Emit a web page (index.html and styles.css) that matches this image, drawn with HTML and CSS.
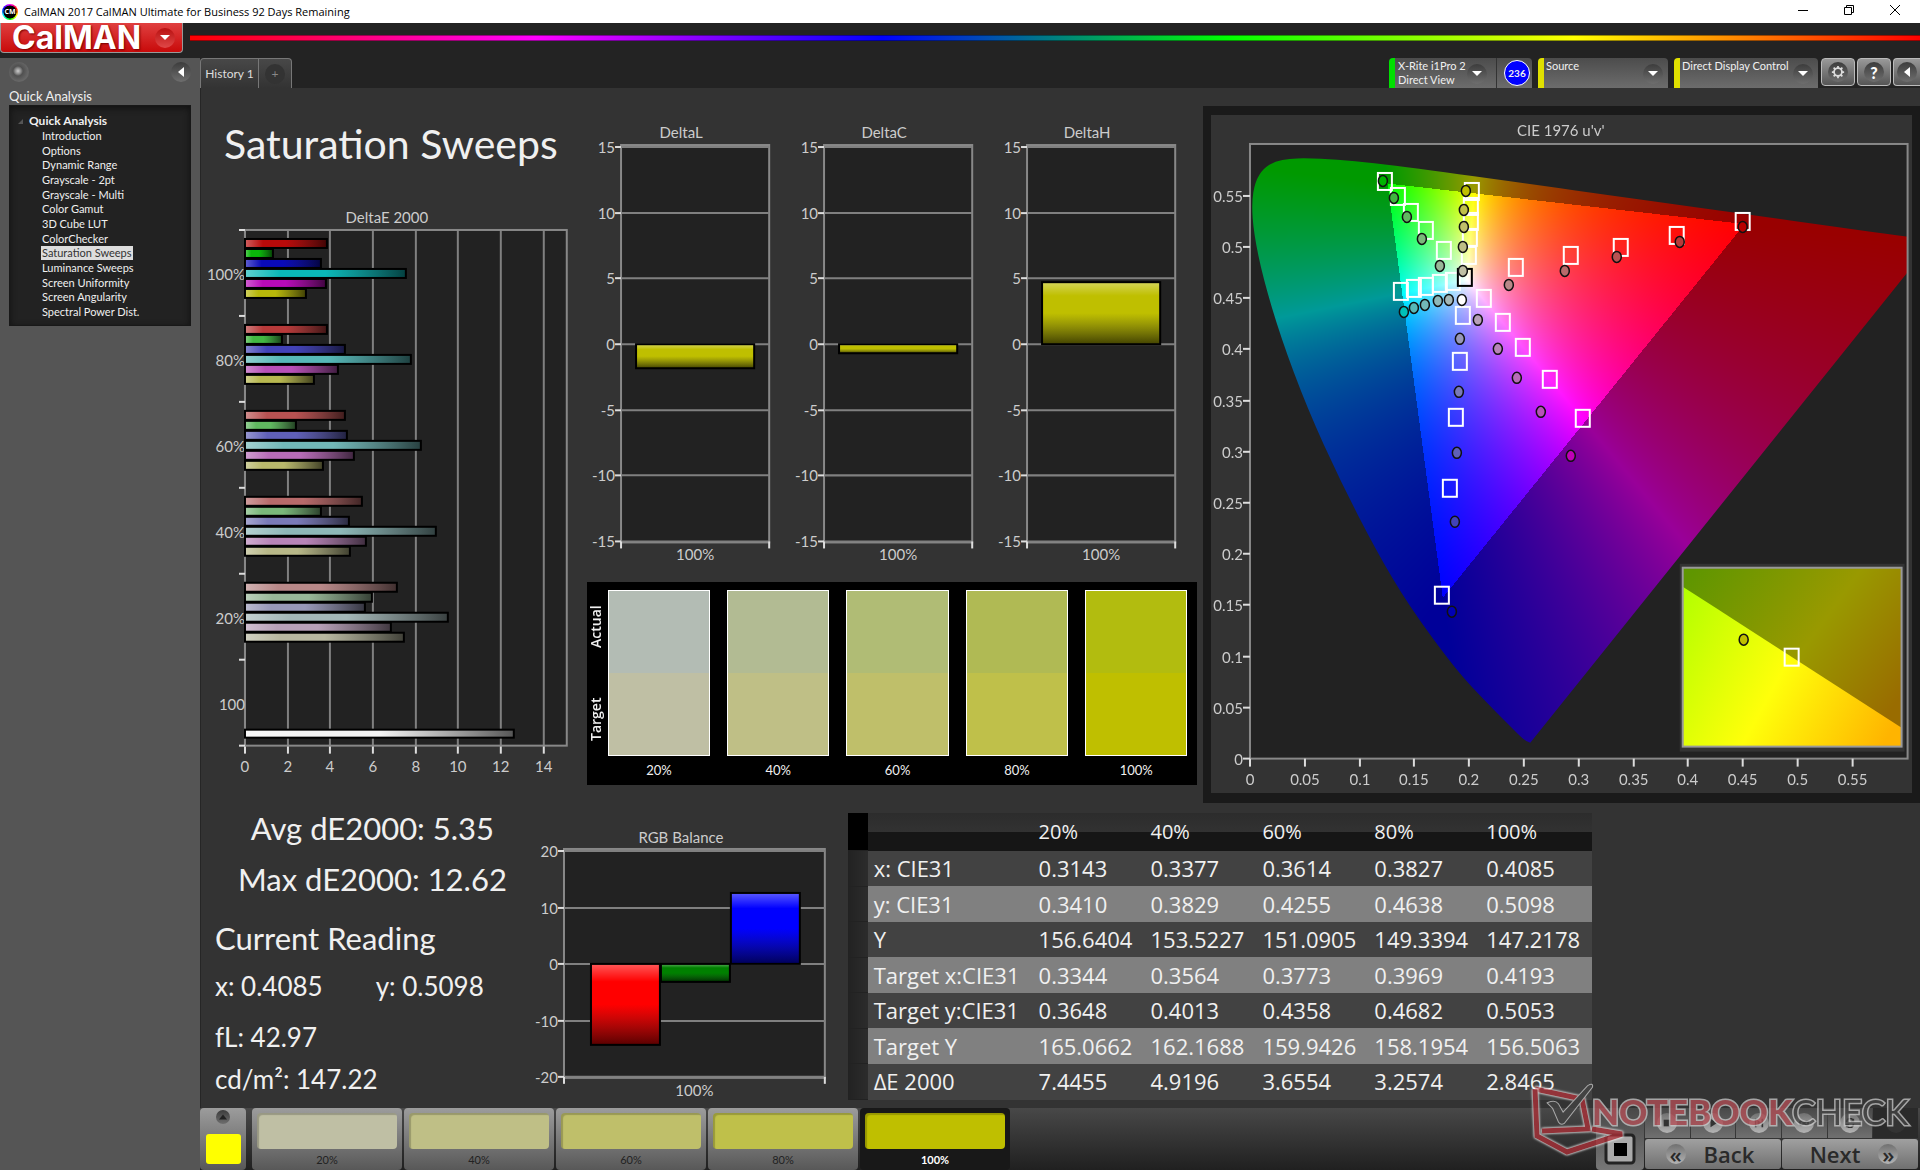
FILE: index.html
```html
<!DOCTYPE html>
<html lang="en">
<head>
    <meta charset="UTF-8">
    <meta name="viewport" content="width=device-width, initial-scale=1.0">
    <title>CalMAN 2017 CalMAN Ultimate for Business 92 Days Remaining</title>
    <link rel="stylesheet" href="styles.css">
</head>
<body>
    <!-- shared gradients for the chart bars -->
    <svg class="defs" width="0" height="0" aria-hidden="true">
        <defs>
            <linearGradient id="shadeH" x1="0" y1="0" x2="1" y2="0">
                <stop offset="0" stop-color="#fff" stop-opacity="0.35"/>
                <stop offset="0.22" stop-color="#fff" stop-opacity="0"/>
                <stop offset="0.5" stop-color="#222" stop-opacity="0"/>
                <stop offset="1" stop-color="#000" stop-opacity="0.65"/>
            </linearGradient>
            <linearGradient id="shadeV" x1="0" y1="0" x2="0" y2="1">
                <stop offset="0" stop-color="#fff" stop-opacity="0.35"/>
                <stop offset="0.22" stop-color="#fff" stop-opacity="0"/>
                <stop offset="0.5" stop-color="#222" stop-opacity="0"/>
                <stop offset="1" stop-color="#000" stop-opacity="0.65"/>
            </linearGradient>
            <linearGradient id="insetDark" gradientUnits="userSpaceOnUse" x1="472" y1="470" x2="668" y2="612">
                <stop offset="0" stop-color="#5f9600"/>
                <stop offset="0.56" stop-color="#999900"/>
                <stop offset="1" stop-color="#996c00"/>
            </linearGradient>
            <linearGradient id="insetLight" gradientUnits="userSpaceOnUse" x1="472" y1="480" x2="690" y2="600">
                <stop offset="0" stop-color="#b4ff00"/>
                <stop offset="0.5" stop-color="#ffff0a"/>
                <stop offset="1" stop-color="#ffb400"/>
            </linearGradient>
        </defs>
    </svg>

    <div class="titlebar">
        <span class="app-icon">CM</span>
        <span class="app-title">CalMAN 2017 CalMAN Ultimate for Business 92 Days Remaining</span>
        <div class="window-buttons">
            <button aria-label="Minimize"><svg viewBox="0 0 12 12"><path d="M1 6.500h10"/></svg></button>
            <button aria-label="Restore"><svg viewBox="0 0 12 12"><path d="M1.500 3.500h7v7h-7zM3.500 3.500v-2h7v7h-2"/></svg></button>
            <button aria-label="Close"><svg viewBox="0 0 12 12"><path d="M1 1l10 10M11 1L1 11"/></svg></button>
        </div>
    </div>

    <header class="brandbar">
        <button class="brand">CalMAN <span class="round"><svg viewBox="0 0 10 6"><path d="M0 0h10L5 5z"/></svg></span></button>
        <div class="rainbow"></div>
    </header>

    <div class="app">
        <aside class="sidebar">
            <div class="sidebar-top">
                <button class="round knob" aria-label="Pin"></button>
                <button class="round" aria-label="Collapse"><svg viewBox="0 0 6 10"><path d="M6 0v10L0 5z"/></svg></button>
            </div>
            <h2>Quick Analysis</h2>
            <nav class="tree">
                <p>Quick Analysis</p>
                <ul>
                    <li><a href="#">Introduction</a></li>
                    <li><a href="#">Options</a></li>
                    <li><a href="#">Dynamic Range</a></li>
                    <li><a href="#">Grayscale - 2pt</a></li>
                    <li><a href="#">Grayscale - Multi</a></li>
                    <li><a href="#">Color Gamut</a></li>
                    <li><a href="#">3D Cube LUT</a></li>
                    <li><a href="#">ColorChecker</a></li>
                    <li><a href="#" class="selected">Saturation Sweeps</a></li>
                    <li><a href="#">Luminance Sweeps</a></li>
                    <li><a href="#">Screen Uniformity</a></li>
                    <li><a href="#">Screen Angularity</a></li>
                    <li><a href="#">Spectral Power Dist.</a></li>
                </ul>
            </nav>
        </aside>

        <div class="main">
            <div class="toolbar">
                <div class="tabs">
                    <button class="tab">History 1</button>
                    <button class="tab tab-add" aria-label="Add history"><span class="round">+</span></button>
                </div>
                <div class="devices">
                    <div class="device meter">
                        <button class="meter-name"><span>X-Rite i1Pro 2<br>Direct View</span><span class="round"><svg viewBox="0 0 10 6"><path d="M0 0h10L5 5z"/></svg></span></button>
                        <span class="badge">236</span>
                    </div>
                    <label class="device source">
                        <select aria-label="Source"><option>Source</option></select>
                        <span class="round"><svg viewBox="0 0 10 6"><path d="M0 0h10L5 5z"/></svg></span>
                    </label>
                    <label class="device display">
                        <select aria-label="Display control"><option>Direct Display Control</option></select>
                        <span class="round"><svg viewBox="0 0 10 6"><path d="M0 0h10L5 5z"/></svg></span>
                    </label>
                    <button class="tool" aria-label="Settings"><span class="round"><svg class="gear" viewBox="0 0 16 16"><circle cx="8" cy="8" r="4.500"/><path d="M8 1v2.500M8 12.500V15M1 8h2.500M12.500 8H15M3 3l2 2M11 11l2 2M13 3l-2 2M5 11l-2 2"/></svg></span></button>
                    <button class="tool" aria-label="Help"><span class="round">?</span></button>
                    <button class="tool tool-last" aria-label="Collapse toolbar"><span class="round"><svg viewBox="0 0 6 10"><path d="M6 0v10L0 5z"/></svg></span></button>
                </div>
            </div>

            <main class="workspace">
                <div class="upper">
                    <section class="sweeps">
                        <h1>Saturation Sweeps</h1>
                        <svg id="deltaE" class="chart" viewBox="0 0 380 590"></svg>
                    </section>

                    <section class="deltas">
                        <div class="delta-charts">
                            <svg id="deltaL" class="chart" viewBox="0 0 203 460"></svg>
                            <svg id="deltaC" class="chart" viewBox="0 0 203 460"></svg>
                            <svg id="deltaH" class="chart" viewBox="0 0 203 460"></svg>
                        </div>
                        <div class="swatches">
                            <div class="swatch-sides"><span>Actual</span><span>Target</span></div>
                            <div class="swatch-list">
                                <figure><div class="pair s20"></div><figcaption>20%</figcaption></figure>
                                <figure><div class="pair s40"></div><figcaption>40%</figcaption></figure>
                                <figure><div class="pair s60"></div><figcaption>60%</figcaption></figure>
                                <figure><div class="pair s80"></div><figcaption>80%</figcaption></figure>
                                <figure><div class="pair s100"></div><figcaption>100%</figcaption></figure>
                            </div>
                        </div>
                    </section>

                    <section class="cie">
                        <canvas id="gamut" width="701" height="678"></canvas>
                        <svg id="ciePlot" class="chart" viewBox="0 0 701 678"></svg>
                    </section>
                </div>

                <div class="lower">
                    <section class="readings">
                        <p class="big centered">Avg dE2000: 5.35</p>
                        <p class="big centered">Max dE2000: 12.62</p>
                        <p class="big current">Current Reading</p>
                        <p class="xy"><span>x: 0.4085</span><span>y: 0.5098</span></p>
                        <p class="fl">fL: 42.97</p>
                        <p class="cd">cd/m²: 147.22</p>
                    </section>
                    <svg id="rgb" class="chart" viewBox="0 0 310 288"></svg>
                    <table>
                        <thead>
                            <tr><td class="handle"></td><th></th><th>20%</th><th>40%</th><th>60%</th><th>80%</th><th>100%</th></tr>
                        </thead>
                        <tbody>
                            <tr><td class="handle"></td><th>x: CIE31</th><td>0.3143</td><td>0.3377</td><td>0.3614</td><td>0.3827</td><td>0.4085</td></tr>
                            <tr><td class="handle"></td><th>y: CIE31</th><td>0.3410</td><td>0.3829</td><td>0.4255</td><td>0.4638</td><td>0.5098</td></tr>
                            <tr><td class="handle"></td><th>Y</th><td>156.6404</td><td>153.5227</td><td>151.0905</td><td>149.3394</td><td>147.2178</td></tr>
                            <tr><td class="handle"></td><th>Target x:CIE31</th><td>0.3344</td><td>0.3564</td><td>0.3773</td><td>0.3969</td><td>0.4193</td></tr>
                            <tr><td class="handle"></td><th>Target y:CIE31</th><td>0.3648</td><td>0.4013</td><td>0.4358</td><td>0.4682</td><td>0.5053</td></tr>
                            <tr><td class="handle"></td><th>Target Y</th><td>165.0662</td><td>162.1688</td><td>159.9426</td><td>158.1954</td><td>156.5063</td></tr>
                            <tr><td class="handle"></td><th>ΔE 2000</th><td>7.4455</td><td>4.9196</td><td>3.6554</td><td>3.2574</td><td>2.8465</td></tr>
                        </tbody>
                    </table>
                </div>
            </main>

            <footer class="levels">
                <button class="level-current" aria-label="Current color"><span class="round"><svg viewBox="0 0 10 6"><path d="M0 6h10L5 0z"/></svg></span><span class="color"></span></button>
                <button class="level"><span class="color c20"></span>20%</button>
                <button class="level"><span class="color c40"></span>40%</button>
                <button class="level"><span class="color c60"></span>60%</button>
                <button class="level"><span class="color c80"></span>80%</button>
                <button class="level active"><span class="color c100"></span>100%</button>
                <div class="transport">
                    <button class="stop" aria-label="Pattern window"><svg viewBox="0 0 32 32"><rect x="2" y="2" width="28" height="28" rx="3" fill="#aaa" stroke="#222" stroke-width="3"/><rect x="10" y="10" width="13" height="13" fill="#000"/></svg></button>
                    <div class="steps">
                        <div class="step-icons">
                            <button aria-label="Stop"><span class="round"><svg viewBox="0 0 12 12"><path d="M2 2h8v8H2z"/></svg></span></button>
                            <button aria-label="Play"><span class="round"><svg viewBox="0 0 12 12"><path d="M3 1l8 5-8 5z"/></svg></span></button>
                            <button aria-label="Next reading"><span class="round"><svg viewBox="0 0 12 12"><path d="M1 1h2v10H1zM4 2l5 4-5 4zM9 1h2v10H9z"/></svg></span></button>
                            <button aria-label="Continuous"><span class="round"><svg class="line" viewBox="0 0 12 12"><path d="M6 6C4 3 1 3 1 6s3 3 5 0 5-3 5 0-3 3-5 0"/></svg></span></button>
                            <button aria-label="Refresh"><span class="round"><svg class="line" viewBox="0 0 12 12"><path d="M10 4a4 4 0 0 0-8 1M2 8a4 4 0 0 0 8-1M10 1v3H7M2 11V8h3"/></svg></span></button>
                            <button aria-label="Record" disabled><span class="round"></span></button>
                        </div>
                        <div class="step-nav">
                            <button><span class="round">«</span>Back</button>
                            <button>Next<span class="round">»</span></button>
                        </div>
                    </div>
                    <svg class="watermark" viewBox="0 0 384 76" aria-label="Notebookcheck">
                        <path class="frame" d="M5 6L52 16 58 46 12 48" />
                        <path class="frame" d="M5 6L7 53 37 69 92 51 62 46"/>
                        <path class="tick" d="M18 20q7-3 10 1l5 9L58 3q5-3 4 1L34 40q-3 2-5-1l-6-14z"/>
                        <text x="62" y="42" class="note">NOTEBOOK</text>
                        <text x="262" y="42" class="check">CHECK</text>
                    </svg>
                </div>
            </footer>
        </div>
    </div>
    <script src="script.js"></script>
</body>
</html>
```
FILE: styles.css
```css
* {
    box-sizing: border-box;
}
body {
    margin: 0;
    min-height: 100vh;
    display: flex;
    flex-direction: column;
    background-color: #232323;
    color: #f0f0f0;
    font-family: Lato, "Open Sans", sans-serif;
    font-size: 13px;
    overflow: hidden;
}
h1, h2, p, ul, figure {
    margin: 0;
    padding: 0;
    font-weight: normal;
}
button, select {
    font: inherit;
    color: inherit;
    border: 0;
    padding: 0;
    margin: 0;
    background: none;
}
.defs {
    position: absolute;
}
.round {
    display: flex;
    align-items: center;
    justify-content: center;
    flex: none;
    width: 20px;
    height: 20px;
    border-radius: 50%;
    background: linear-gradient(#3c3c3c, #6e6e6e);
}
.round svg {
    width: 10px;
    height: 10px;
    fill: #fff;
}

/* window title */
.titlebar {
    display: flex;
    align-items: center;
    height: 23px;
    background-color: #fff;
    color: #000;
    font-family: "Open Sans", sans-serif;
    font-size: 11px;
}
.app-icon {
    width: 16px;
    height: 16px;
    margin: 0 6px 0 2px;
    border-radius: 50%;
    background: radial-gradient(#000 55%, transparent 60%), conic-gradient(#f0f, #f00, #ff0, #0f0, #0ff, #00f, #f0f);
    color: #fff;
    font-size: 7px;
    font-weight: bold;
    line-height: 16px;
    text-align: center;
}
.window-buttons {
    display: flex;
    margin-left: auto;
    margin-right: 2px;
}
.window-buttons button {
    width: 46px;
    height: 23px;
}
.window-buttons svg {
    width: 12px;
    height: 12px;
    fill: none;
    stroke: #000;
}

/* logo and rainbow line */
.brandbar {
    display: flex;
    align-items: flex-start;
    gap: 7px;
    height: 35px;
}
.brand {
    display: flex;
    align-items: center;
    justify-content: space-between;
    width: 183px;
    height: 30px;
    padding: 0 7px 0 11px;
    border: 1px solid #999;
    border-top: 0;
    border-radius: 0 0 4px 4px;
    background: linear-gradient(#e04040, #c80a0a);
    color: #fff;
    font-family: Inter, sans-serif;
    font-size: 32px;
    font-weight: 700;
    line-height: 30px;
    text-shadow: 1px 1px 2px #700;
}
.brand .round {
    background: linear-gradient(#b81010, #e04848);
}
.rainbow {
    flex: 1;
    height: 6px;
    margin-top: 12px;
    background: linear-gradient(90deg, #f00, #f0f 20%, #00f 40%, #0f0 60%, #ff0 80%, #f00);
    border-top: 1px solid rgba(0, 0, 0, 0.4);
    border-bottom: 1px solid rgba(0, 0, 0, 0.4);
}

.app {
    display: flex;
    flex: 1;
}

/* workflow tree */
.sidebar {
    width: 200px;
    flex: none;
    padding: 4px 9px;
    background-color: #555;
}
.sidebar-top {
    display: flex;
    justify-content: space-between;
}
.knob {
    background: radial-gradient(circle at 45% 45%, #ccc 0, #888 3px, #505050 5px, #666 10px);
}
.sidebar h2 {
    margin-top: 5px;
    font-size: 13px;
    line-height: 18px;
}
.tree {
    height: 221px;
    padding: 7px 0 6px 19px;
    border: 1px solid #181818;
    background-color: #222;
    box-shadow: inset 0 2px 6px #111;
    font-size: 11px;
    display: flex;
    flex-direction: column;
}
.tree p {
    font-size: 12px;
    font-weight: bold;
    line-height: 16px;
}
.tree p::before {
    content: "";
    float: left;
    margin: 6px 0 0 -11px;
    border-left: 5px solid transparent;
    border-bottom: 5px solid #555;
}
.tree ul {
    flex: 1;
    display: flex;
    flex-direction: column;
    justify-content: space-between;
    list-style: none;
    padding-left: 12px;
}
.tree a {
    display: inline-block;
    padding: 0 1px;
    color: #f0f0f0;
    line-height: 14px;
    text-decoration: none;
}
.tree li {
    height: 14px;
}
.tree .selected {
    background-color: #ddd;
    color: #333;
}

/* tabs and devices */
.main {
    flex: 1;
    min-width: 0;
    display: flex;
    flex-direction: column;
}
.toolbar {
    display: flex;
    justify-content: space-between;
    height: 30px;
}
.tabs, .devices {
    display: flex;
}
.tab {
    width: 59px;
    border: 1px solid #777;
    border-bottom: 0;
    border-radius: 4px 0 0 0;
    background: linear-gradient(#484848, #333);
    color: #ddd;
    font-size: 12px;
}
.tab-add {
    width: 33px;
    border-left: 0;
    border-radius: 0 4px 0 0;
    color: #888;
}
.tab-add .round {
    margin: 0 auto;
    background: #333;
}
.device {
    display: flex;
    align-items: center;
    height: 30px;
    margin-right: 6px;
    border-left: 6px solid #e0e000;
    border-radius: 4px 4px 0 0;
    background: linear-gradient(#4c4c4c, #6c6c6c);
    font-size: 11px;
    line-height: 14px;
}
.device select {
    flex: 1;
    min-width: 0;
    height: 30px;
    padding: 0 0 14px 2px;
    appearance: none;
}
.device .round {
    margin: 2px 5px 0 0;
}
.meter {
    width: 143px;
    border-left-color: #00e000;
}
.meter-name {
    flex: 1;
    display: flex;
    justify-content: space-between;
    align-items: center;
    height: 30px;
    padding-left: 3px;
    border-right: 1px solid #333;
    text-align: left;
    white-space: nowrap;
}
.meter .meter-name .round {
    margin-right: 9px;
}
.badge {
    flex: none;
    width: 26px;
    height: 26px;
    margin: 0 2px 0 7px;
    border: 1px solid #fff;
    border-radius: 50%;
    background-color: #00f;
    font-size: 10px;
    font-weight: bold;
    line-height: 24px;
    text-align: center;
}
.source {
    width: 130px;
}
.display {
    width: 144px;
    margin-right: 3px;
}
.display .round {
    margin-left: -4px;
}
.tool {
    display: flex;
    align-items: center;
    justify-content: center;
    width: 34px;
    height: 28px;
    margin-right: 2px;
    border: 1px solid #bbb;
    border-radius: 4px;
    background: linear-gradient(#999, #555);
    color: #fff;
    font-size: 16px;
    font-weight: 900;
}
.tool-last {
    width: 27px;
    margin-right: 0;
    border-right: 0;
    border-radius: 4px 0 0 4px;
}
.round .gear {
    width: 14px;
    height: 14px;
    fill: none;
    stroke: #ddd;
    stroke-width: 2px;
}

/* workspace */
.workspace {
    flex: 1;
    border-left: 1px solid #262626;
    background-color: #333;
}
.upper {
    display: grid;
    grid-template-columns: 380fr 623fr 717fr;
    align-items: start;
}
.chart {
    display: block;
    width: 100%;
    font-size: 15px;
    fill: #ccc;
}
h1 {
    padding: 26px 0 26px 23px;
    font-size: 41px;
    line-height: 60px;
}
.deltas {
    padding: 30px 6px 0 2px;
}
.delta-charts {
    display: grid;
    grid-template-columns: 1fr 1fr 1fr;
    margin-right: 5px;
}
.swatches {
    display: flex;
    gap: 4px;
    height: 203px;
    margin: 4px 0 0 4px;
    padding: 8px 10px 0 1px;
    background-color: #000;
}
.swatch-sides {
    display: flex;
    flex-direction: row-reverse;
    justify-content: space-between;
    width: 16px;
    height: 166px;
    padding: 15px 0;
    writing-mode: vertical-rl;
    font-family: "Open Sans", sans-serif;
    font-size: 14px;
    font-weight: 600;
    line-height: 16px;
    transform: rotate(180deg);
}
.swatch-list {
    flex: 1;
    display: grid;
    grid-template-columns: repeat(5, 1fr);
    column-gap: 17px;
}
.swatches figure {
    text-align: center;
}
.swatches figcaption {
    font-size: 13px;
    line-height: 28px;
}
.pair {
    height: 166px;
    border: 1px solid #fff;
}
.s20 { background: linear-gradient(#b3bcb4 50%, #bfbfa4 50%); }
.s40 { background: linear-gradient(#b2bb93 50%, #bfbf86 50%); }
.s60 { background: linear-gradient(#b0bc75 50%, #bfbf6a 50%); }
.s80 { background: linear-gradient(#b0ba54 50%, #bfc04a 50%); }
.s100 { background: linear-gradient(#b2bc0f 50%, #bfbf00 50%); }
.cie {
    display: grid;
    margin-top: 18px;
    border: 8px solid #1a1a1a;
    border-top-width: 9px;
    border-bottom-width: 10px;
}
.cie canvas, .cie svg {
    grid-area: 1 / 1;
    width: 100%;
}

.lower {
    display: grid;
    grid-template-columns: minmax(0, 329fr) minmax(0, 310fr) minmax(0, 753fr) minmax(0, 328fr);
    align-items: start;
}
.lower .chart {
    margin-top: 14px;
}
.readings {
    padding: 5px 0 0 14px;
    font-size: 26px;
    line-height: 36px;
}
.readings .big {
    margin-bottom: 11px;
    font-size: 31px;
    line-height: 40px;
}
.readings .centered {
    text-align: center;
}
.readings .current {
    margin-top: 19px;
    margin-bottom: 10px;
}
.xy {
    display: flex;
    gap: 53px;
    white-space: nowrap;
}
.fl {
    margin: 15px 0 6px;
}
table {
    height: 287px;
    margin: 10px 0 0 8px;
    border-collapse: collapse;
    table-layout: fixed;
    font-family: "Open Sans", sans-serif;
    font-size: 22px;
    line-height: 30px;
    background-color: #424242;
}
th, td {
    width: 112px;
    padding: 0 0 0 6px;
    font-weight: normal;
    text-align: left;
    white-space: nowrap;
}
th:nth-child(2) {
    width: 165px;
}
td.handle {
    width: 20px;
    padding: 0 0 0 20px;
    background: linear-gradient(90deg, #222, #2c2c2c);
    border-bottom: 1px solid #222;
}
thead tr {
    height: 38px;
    background: linear-gradient(#2c2c2c, #323232 50%, #161616 50%, #161616);
    font-size: 20px;
}
thead th {
    font-weight: 500;
}
thead td.handle {
    background: #000;
}
tbody tr:nth-child(even) {
    background-color: #808080;
}

/* bottom bar */
.levels {
    display: flex;
    height: 62px;
    background: linear-gradient(#484848, #202020);
    gap: 2px;
}
.level-current, .level {
    display: flex;
    flex-direction: column;
    align-items: center;
    border-radius: 4px;
    background: linear-gradient(#9c9c9c, #585858);
    color: #222;
    font-size: 11px;
}
.level-current {
    width: 46px;
    margin-right: 4px;
}
.level-current .round {
    width: 14px;
    height: 14px;
    margin: 2px 0 10px;
}
.level-current .round svg {
    width: 8px;
    height: 6px;
    fill: #222;
}
.level-current .color {
    width: 35px;
    height: 30px;
    border-radius: 3px;
    background-color: #ff0;
}
.level {
    width: 150px;
    padding: 5px 5px 0;
}
.level .color {
    width: 100%;
    height: 36px;
    margin-bottom: 4px;
    border-radius: 4px;
    box-shadow: inset 2px 2px 1px rgba(0, 0, 0, 0.2);
}
.level.active {
    background: #181818;
    color: #fff;
    font-weight: bold;
}
.c20 { background-color: #bfbfa4; }
.c40 { background-color: #bfbf86; }
.c60 { background-color: #bfbf6a; }
.c80 { background-color: #bfc04a; }
.c100 { background-color: #bfbf00; }
.transport {
    position: relative;
    display: flex;
    gap: 1px;
    margin-left: auto;
    padding-right: 2px;
}
.stop {
    width: 48px;
    padding: 22px 8px 0;
    border-radius: 4px;
    background: linear-gradient(#484848, #777);
}
.stop svg {
    width: 32px;
    height: 32px;
}
.steps {
    width: 273px;
}
.step-icons {
    display: grid;
    grid-template-columns: repeat(6, 1fr);
    gap: 1px;
    height: 30px;
}
.step-icons button {
    display: flex;
    justify-content: center;
    padding-top: 5px;
    background: linear-gradient(#484848, #707070);
}
.step-icons button:disabled {
    background: #2a2a2a;
}
.step-icons .round, .step-nav .round {
    background: linear-gradient(#707070, #b4b4b4);
}
.step-icons button:disabled .round {
    background: #333;
}
.step-icons .round svg {
    fill: #333;
}
.step-icons .round .line {
    fill: none;
    stroke: #333;
    stroke-width: 2px;
}
.step-nav {
    display: grid;
    grid-template-columns: 1fr 1fr;
    gap: 1px;
    margin-top: 1px;
}
.step-nav button {
    display: flex;
    align-items: center;
    justify-content: center;
    gap: 18px;
    height: 30px;
    padding-right: 6px;
    border-radius: 3px;
    background: linear-gradient(#a0a0a0, #707070);
    color: #2a2a2a;
    font-family: "Open Sans", sans-serif;
    font-size: 22px;
    font-weight: 600;
    line-height: 28px;
}
.step-nav button:last-child {
    padding: 0 0 0 8px;
}
.watermark {
    position: absolute;
    right: 6px;
    bottom: 11px;
    width: 384px;
    height: 76px;
    overflow: visible;
    opacity: 0.75;
    font-family: Lato, sans-serif;
    font-size: 35px;
    paint-order: stroke;
    stroke: #ccc;
    stroke-width: 3px;
    pointer-events: none;
}
.watermark .frame {
    fill: none;
    stroke: #b03038;
    stroke-width: 5px;
    filter: drop-shadow(0 0 1px #fff) drop-shadow(0 0 1px #fff);
}
.watermark .tick {
    fill: #444;
    stroke-width: 2px;
}
.watermark .note {
    fill: #b85058;
    font-weight: 900;
}
.watermark .check {
    fill: #444;
}
```
FILE: script.js
```js
var SVG = 'http://www.w3.org/2000/svg';

function add(parent, tag, attrs, text) {
    var el = document.createElementNS(SVG, tag);
    for (var key in attrs) el.setAttribute(key, attrs[key]);
    if (text !== undefined) el.textContent = text;
    parent.appendChild(el);
    return el;
}
function line(svg, x1, y1, x2, y2, color, width) {
    add(svg, 'line', {x1: x1, y1: y1, x2: x2, y2: y2, stroke: color || '#808080', 'stroke-width': width || 2});
}
function label(svg, x, y, text, anchor) {
    add(svg, 'text', {x: x, y: y, 'text-anchor': anchor || 'middle'}, text);
}
function bar(svg, x, y, w, h, color, shade) {
    add(svg, 'rect', {x: x, y: y, width: w, height: h, fill: color});
    add(svg, 'rect', {x: x, y: y, width: w, height: h, fill: 'url(#' + shade + ')', stroke: '#000', 'stroke-width': 2});
}

// DeltaE 2000, one group of six bars for each saturation level
function drawDeltaE() {
    var svg = document.getElementById('deltaE');
    var left = 44, right = 366, top = 30, bottom = 546, unit = 21.33, step = 86;
    var groups = [
        ['100%', [3.83, 1.33, 3.55, 7.53, 3.78, 2.85], ['#b80a0a', '#0ab80a', '#0a0ab8', '#0ab8b8', '#b80ab8', '#b8b80a']],
        ['80%', [3.83, 1.72, 4.67, 7.77, 4.35, 3.22], ['#b83a3a', '#42b842', '#4242b8', '#56b8b8', '#b850b8', '#b8b850']],
        ['60%', [4.67, 2.38, 4.77, 8.23, 5.09, 3.65], ['#b85252', '#60b860', '#6060b8', '#72b8b8', '#b86cb8', '#b8b86c']],
        ['40%', [5.48, 3.55, 4.87, 8.94, 5.66, 4.94], ['#b86a6a', '#7ab87a', '#7a7ab8', '#8eb8b8', '#b884b8', '#b8b888']],
        ['20%', [7.11, 5.94, 5.61, 9.5, 6.83, 7.44], ['#b88888', '#98b898', '#9898b8', '#a4b8b8', '#b8a0b8', '#b8b8a0']],
        ['100', [], []]
    ];
    label(svg, 186, 23, 'DeltaE 2000');
    add(svg, 'rect', {x: left, y: top, width: right - left, height: bottom - top, fill: '#222'});
    for (var v = 0; v <= 14; v += 2) {
        var x = Math.round(left + v * unit);
        line(svg, x, top, x, bottom);
        line(svg, x, bottom, x, bottom + 8, '#ddd');
        label(svg, x, 572, v);
    }
    add(svg, 'rect', {x: left, y: top, width: right - left, height: bottom - top, fill: 'none', stroke: '#888', 'stroke-width': 2});
    groups.forEach(function (g, i) {
        var y = top + i * step;
        line(svg, left - 6, y, left, y, '#ddd');
        label(svg, left, y + 50, g[0], 'end');
        g[1].forEach(function (val, n) {
            bar(svg, left, y + 9 + n * 10, Math.round(val * unit), 9, g[2][n], 'shadeH');
        });
    });
    line(svg, left - 6, bottom, left, bottom, '#ddd');
    bar(svg, left, 530, Math.round(12.62 * unit), 8, '#f4f4f4', 'shadeH');
}

function drawColumns(id, title, o) {
    var svg = document.getElementById(id);
    label(svg, o.titleX, o.titleY, title);
    add(svg, 'rect', {x: o.left, y: o.top - 2, width: o.right - o.left, height: o.bottom - o.top + 3, fill: '#222', stroke: '#888', 'stroke-width': 2});
    var zero = Math.round((o.top + o.bottom) / 2);
    for (var v = -o.max; v <= o.max; v += o.step) {
        var y = Math.round(zero - v * (o.bottom - o.top) / (2 * o.max));
        line(svg, o.left, y, o.right, y);
        line(svg, o.left - 6, y, o.left, y, '#ddd');
        label(svg, o.left - 6, y + 6, v, 'end');
    }
    line(svg, o.left, o.bottom, o.left, o.bottom + 7, '#ddd');
    line(svg, o.right, o.bottom, o.right, o.bottom + 7, '#ddd');
    label(svg, (o.left + o.right) / 2, o.bottom + 19, '100%');
    o.bars.forEach(function (b) {
        var h = Math.round(Math.abs(b[2]) * (o.bottom - o.top) / (2 * o.max));
        bar(svg, b[0], b[2] > 0 ? zero - h : zero, b[1], h, b[3], 'shadeV');
    });
}

// u'v' diagram
var AXIS = {x: 39, y: 644, u: 1096, v: 1024, right: 697, top: 29};
var LOCUS = [
    [.1733, .0048], [.1714, .0051], [.1689, .0069], [.1644, .0109], [.1566, .0177], [.1440, .0297],
    [.1241, .0578], [.1096, .0868], [.0913, .1327], [.0687, .2007], [.0454, .2950], [.0235, .4127],
    [.0082, .5384], [.0039, .6548], [.0139, .7502], [.0389, .8120], [.0743, .8338], [.1142, .8262],
    [.1547, .8059], [.2296, .7543], [.3016, .6923], [.3731, .6245], [.4441, .5547], [.5125, .4866],
    [.5752, .4242], [.6270, .3725], [.6658, .3340], [.6915, .3083], [.7190, .2809], [.7347, .2653]
];

function drawGamut() {
    var canvas = document.getElementById('gamut');
    var ctx = canvas.getContext('2d');
    var w = canvas.width, h = canvas.height;
    var layer = document.createElement('canvas');
    layer.width = w;
    layer.height = h;
    var lctx = layer.getContext('2d');
    var img = lctx.createImageData(w, h);
    for (var py = 0; py < h; py++) {
        for (var px = 0; px < w; px++) {
            var u = (px - AXIS.x) / AXIS.u;
            var v = Math.max((AXIS.y - py) / AXIS.v, 0.001);
            var X = 9 * u / (4 * v), Z = (12 - 3 * u - 20 * v) / (4 * v);
            var rgb = [
                3.2406 * X - 1.5372 - 0.4986 * Z,
                -0.9689 * X + 1.8758 + 0.0415 * Z,
                0.0557 * X - 0.2040 + 1.0570 * Z
            ];
            var max = Math.max(rgb[0], rgb[1], rgb[2]);
            // colors outside the display gamut are dimmed
            var inside = Math.min(rgb[0], rgb[1], rgb[2]) >= 0;
            var i = (py * w + px) * 4;
            for (var c = 0; c < 3; c++) {
                img.data[i + c] = 255 * (inside ? 1 : 0.6) * Math.max(rgb[c], 0) / max;
            }
            img.data[i + 3] = 255;
        }
    }
    lctx.putImageData(img, 0, 0);

    ctx.fillStyle = '#222';
    ctx.fillRect(AXIS.x, AXIS.top, AXIS.right - AXIS.x, AXIS.y - AXIS.top);
    ctx.beginPath();
    ctx.rect(AXIS.x, AXIS.top, AXIS.right - AXIS.x, AXIS.y - AXIS.top);
    ctx.clip();
    var pts = LOCUS.map(function (p) {
        var d = -2 * p[0] + 12 * p[1] + 3;
        return [AXIS.x + 4 * p[0] / d * AXIS.u, AXIS.y - 9 * p[1] / d * AXIS.v];
    });
    // smooth the outline through the midpoints
    ctx.beginPath();
    ctx.moveTo(pts[0][0], pts[0][1]);
    for (var n = 1; n < pts.length - 1; n++) {
        ctx.quadraticCurveTo(pts[n][0], pts[n][1], (pts[n][0] + pts[n + 1][0]) / 2, (pts[n][1] + pts[n + 1][1]) / 2);
    }
    ctx.lineTo(pts[n][0], pts[n][1]);
    ctx.closePath();
    ctx.clip();
    ctx.drawImage(layer, 0, 0);
}

function square(svg, p, color) {
    add(svg, 'rect', {x: p[0] - 7, y: p[1] - 8, width: 14, height: 17, fill: 'none', stroke: color || '#fff', 'stroke-width': 2});
}
function dot(svg, p, color) {
    add(svg, 'ellipse', {cx: p[0], cy: p[1], rx: 4.5, ry: 5.5, fill: color, stroke: '#111', 'stroke-width': 1.5});
}

function drawCie() {
    var svg = document.getElementById('ciePlot');
    var A = AXIS;
    label(svg, 350, 21, "CIE 1976 u'v'");
    add(svg, 'rect', {x: A.x, y: A.top, width: A.right - A.x, height: A.y - A.top, fill: 'none', stroke: '#888', 'stroke-width': 2});
    for (var i = 0; i <= 11; i++) {
        var val = String(i * 5 / 100);
        var x = Math.round(A.x + i * 0.05 * A.u), y = Math.round(A.y - i * 0.05 * A.v);
        line(svg, x, A.y, x, A.y + 8, '#ddd');
        line(svg, A.x - 7, y, A.x, y, '#ddd');
        label(svg, x, A.y + 26, val);
        label(svg, A.x - 7, y + 6, val, 'end');
    }
    // from most saturated to least for each colour: targets, readings, reading fills
    var series = [
        [[[174, 66], [187, 81], [200, 97], [215, 115], [233, 135]],
         [[172, 66], [183, 83], [196, 102], [211, 124], [229, 151]],
         ['#00b400', '#40b440', '#60b860', '#7ab87a', '#98b898']],
        [[[261, 76], [260, 91], [260, 106], [259, 122], [258, 140]],
         [[255, 76], [253, 95], [253, 112], [252, 132], [252, 156]],
         ['#bfbf00', '#bfc04a', '#bfbf6a', '#bfbf86', '#bfbfa4']],
        [[[190, 176], [203, 173], [215, 171], [229, 168], [242, 166]],
         [[193, 197], [203, 193], [214, 190], [227, 186], [238, 185]],
         ['#00c0b8', '#56b8b8', '#72b8b8', '#8eb8b8', '#a4b8b8']],
        [[[532, 106], [466, 120], [410, 132], [360, 140], [305, 152]],
         [[532, 112], [469, 127], [406, 142], [354, 156], [298, 170]],
         ['#b80000', '#b83a3a', '#b85252', '#b86a6a', '#b88888']],
        [[[372, 303], [339, 264], [312, 232], [292, 207], [273, 183]],
         [[360, 341], [330, 297], [306, 263], [287, 234], [267, 205]],
         ['#c000b8', '#b850b8', '#b86cb8', '#b884b8', '#b8a0b8']],
        [[[231, 480], [239, 373], [245, 302], [249, 246], [252, 200]],
         [[241, 497], [244, 407], [246, 338], [248, 277], [249, 224]],
         ['#0000b4', '#4242b8', '#6060b8', '#7a7ab8', '#9898b8']]
    ];
    series.forEach(function (s) {
        s[0].forEach(function (p) { square(svg, p); });
    });
    square(svg, [254, 162], '#000');
    series.forEach(function (s) {
        s[1].forEach(function (p, n) { dot(svg, p, s[2][n]); });
    });
    dot(svg, [251, 185], '#fff');

    // zoomed view round the selected target
    add(svg, 'rect', {x: 469, y: 449, width: 225, height: 188, fill: '#333'});
    add(svg, 'rect', {x: 472, y: 453, width: 219, height: 179, fill: 'url(#insetDark)'});
    add(svg, 'path', {d: 'M472 472L691 613V632H472Z', fill: 'url(#insetLight)'});
    add(svg, 'rect', {x: 472, y: 453, width: 219, height: 179, fill: 'none', stroke: '#999', 'stroke-width': 2});
    square(svg, [581, 542]);
    dot(svg, [533, 525], '#bfbf00');
}

drawDeltaE();
var delta = {left: 38, right: 186, top: 29, bottom: 423, max: 15, step: 5, titleX: 98, titleY: 20};
drawColumns('deltaL', 'DeltaL', Object.assign({bars: [[53, 118, -1.8, '#bfbf00']]}, delta));
drawColumns('deltaC', 'DeltaC', Object.assign({bars: [[53, 118, -0.7, '#bfbf00']]}, delta));
drawColumns('deltaH', 'DeltaH', Object.assign({bars: [[53, 118, 4.7, '#bfbf00']]}, delta));
drawColumns('rgb', 'RGB Balance', {
    left: 34, right: 295, top: 34, bottom: 260, max: 20, step: 10, titleX: 151, titleY: 26,
    bars: [[61, 69, -14.3, '#f00'], [131, 69, -3.2, '#008000'], [201, 69, 12.6, '#00f']]
});
drawCie();
drawGamut();
```
